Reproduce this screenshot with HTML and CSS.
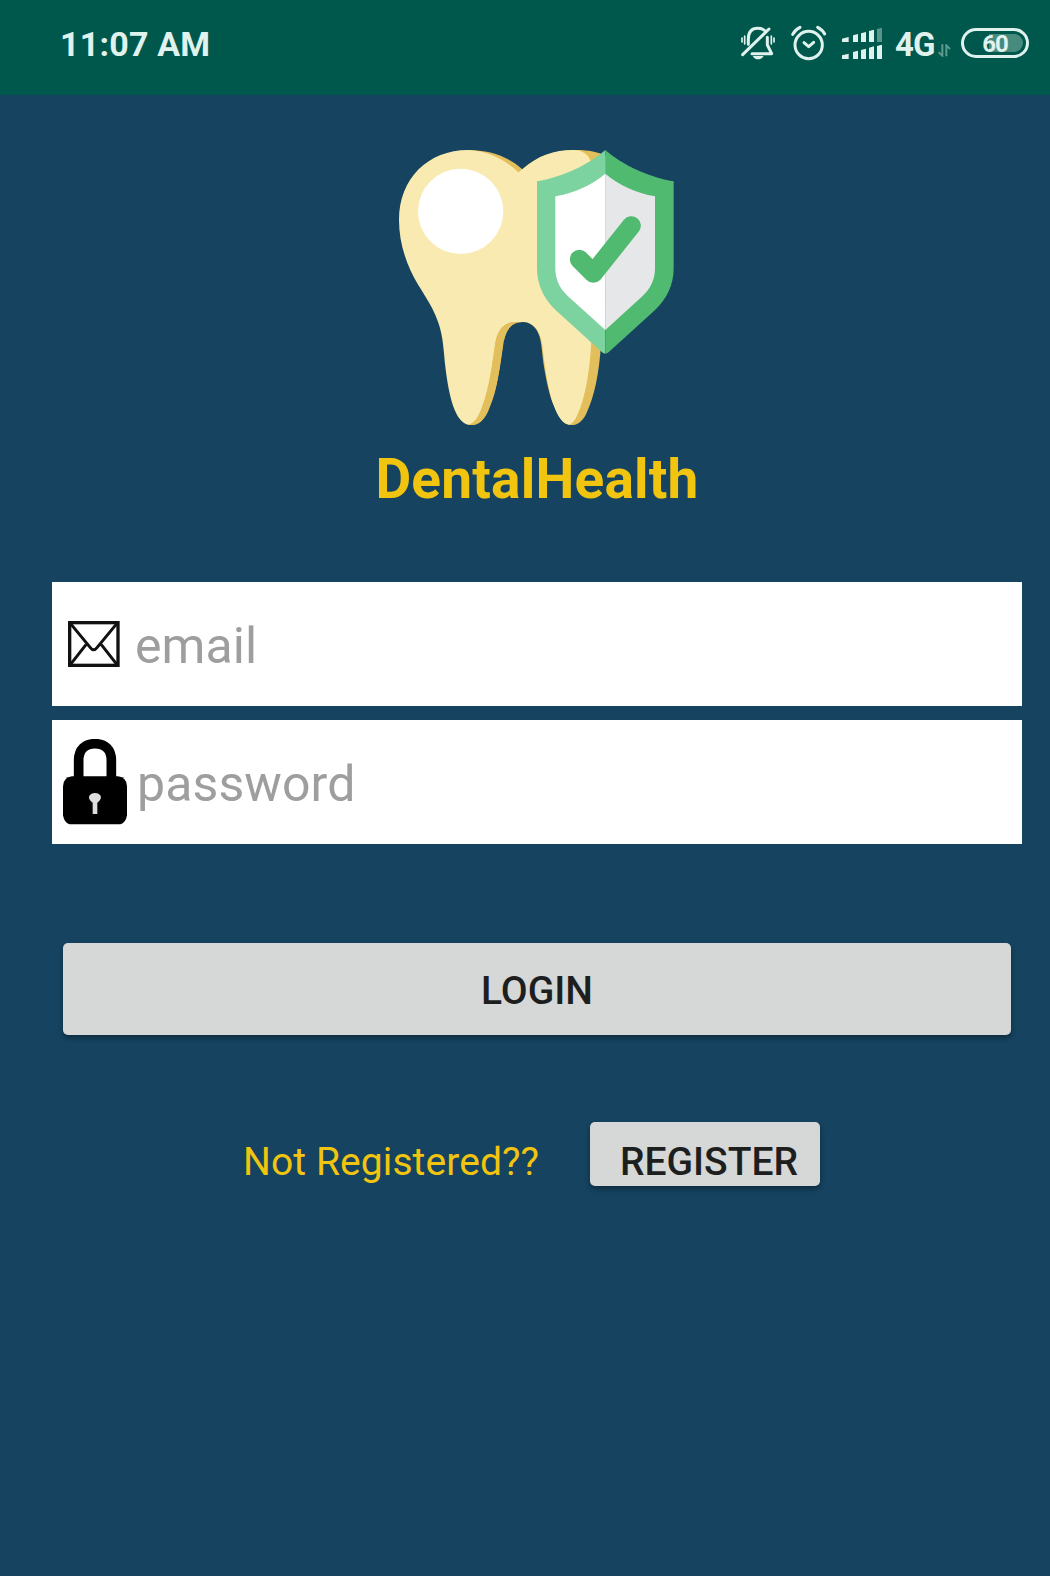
FILE: index.html
```html
<!DOCTYPE html>
<html lang="en">
<head>
<meta charset="UTF-8" />
<meta name="viewport" content="width=device-width, initial-scale=1" />
<title>DentalHealth</title>
<link rel="stylesheet" href="styles.css">
</head>
<body>

<header class="statusbar">
  <span class="time">11:07 AM</span>
  <div class="status-icons">
    <!-- muted bell -->
    <svg class="bell" width="37" height="36" viewBox="30 45 111 108" fill="none" stroke="#e0f2ee" stroke-width="9" stroke-linecap="round">
      <path d="M55 103V88C55 66 66 55 83 55C94 55 102 58 107 65"/>
      <path d="M112 82V105L125 131H66" stroke-linejoin="round"/>
      <path d="M38 134L117 57"/>
      <path d="M36 84V96M44 78V102M124 78V102M132 84V96" stroke-width="5"/>
      <path d="M68 138H101C97 145 91 148 84 148S72 145 68 138Z" fill="#e0f2ee" stroke="none"/>
    </svg>
    <!-- alarm clock -->
    <svg class="alarm" width="37" height="36" viewBox="180 45 111 108" fill="none" stroke="#e0f2ee" stroke-width="9" stroke-linecap="round">
      <circle cx="236" cy="105" r="41"/>
      <path d="M222 98L236 110L251 97" stroke-linejoin="round"/>
      <path d="M188 73C192 65 200 57 210 52M263 52C272 57 280 64 284 72"/>
    </svg>
    <!-- signal, two sims -->
    <svg class="signal" width="42" height="33" viewBox="333 51 126 99" fill="#e0f2ee">
      <path d="M336 86L356 81V96H336ZM369 76L384 72V96H369ZM393 70L408 66V96H393ZM417 63L432 59V96H417Z"/>
      <path d="M441 57L456 53V96H441Z" opacity=".4"/>
      <path d="M336 136L356 131V147H336ZM369 126L384 122V147H369ZM393 120L408 116V147H393ZM417 113L432 109V147H417ZM441 108L456 104V147H441Z"/>
    </svg>
    <span class="network">4G</span>
    <svg class="data" width="13" height="13" viewBox="174 101 39 39" fill="none" stroke="#5f998d" stroke-width="6">
      <path d="M187 102V136L176 126M199 138V105L210 116"/>
    </svg>
    <div class="battery"><span>60</span></div>
  </div>
</header>

<main class="login">
  <svg class="logo" width="275" height="275" viewBox="57 30 825 825">
    <!-- tooth shade -->
    <path fill="#e3bf5c" d="M264 30C330 30 386 50 427 88C474 46 528 30 590 30C626 30 664 36 700 60L663 610C658 700 642 774 620 818C602 862 562 865 543 838L420 600L370 600C362 680 352 750 328 805C308 862 265 868 244 837Z"/>
    <!-- tooth -->
    <path fill="#f8eab0" d="M264 30C325 33 375 58 415 97L427 88C474 46 522 30 580 30C610 31 630 46 632 68L660 400L634 600C630 690 616 775 592 825C585 842 576 852 567 854C530 848 508 770 495 680C489 640 488 608 480 588C471 560 450 546 427 546L402 546C370 548 352 572 346 608C338 660 330 740 305 805C295 833 282 850 267 854C225 850 206 765 196 680C191 635 190 590 175 548C155 487 119 450 92 392C70 345 57 292 57 240C57 115 145 30 264 30Z"/>
    <!-- gap between the roots -->
    <path fill="#154360" d="M427 546C393 546 377 572 371 606C360 680 352 760 320 858H555C519 820 502 740 492 680C486 640 485 608 478 588C469 560 450 546 427 546Z"/>
    <path fill="#e3bf5c" d="M402 546C370 548 352 572 346 608C338 660 330 740 305 805C295 833 282 850 267 854C290 858 305 847 317 825C352 755 360 680 371 606C377 568 397 546 427 546Z"/>
    <circle cx="242" cy="214" r="128" fill="#fff"/>
    <!-- shield -->
    <path fill="#7dd3a0" d="M676 30C625 75 545 112 471 124V385C471 435 492 478 530 513L663 634Q669 641 676 641Z"/>
    <path fill="#50ba70" d="M676 30C727 75 807 112 881 124V385C881 435 860 478 822 513L689 634Q683 641 676 641Z"/>
    <path fill="#fff" d="M676 101C637 134 583 159 526 169V385C526 418 539 446 564 469L676 570Z"/>
    <path fill="#e6e7e9" d="M676 101C715 134 769 159 825 169V385C825 418 812 446 787 469L676 570Z"/>
    <path d="M598 358L640 400L754 257" fill="none" stroke="#50ba70" stroke-width="57" stroke-linecap="round" stroke-linejoin="round"/>
  </svg>
  <h1>DentalHealth</h1>

  <label class="field email">
    <svg width="52" height="47" viewBox="84 151 156 141" fill="none" stroke="#111" stroke-width="9">
      <rect x="89" y="156" width="145" height="128" stroke-width="10"/>
      <path d="M91 158L151 231Q161 244 171 231L231 158M91 282L138 222M231 282L184 222"/>
    </svg>
    <input type="text" placeholder="email">
  </label>
  <label class="field password">
    <svg width="64" height="86" viewBox="68 506 192 258">
      <path d="M115 628V570C115 538 134 520 164 520S213 538 213 570V628" fill="none" stroke="#000" stroke-width="29"/>
      <path d="M95 618H233Q260 622 260 648V735Q256 758 240 762H88Q72 758 68 735V648Q68 622 95 618Z"/>
      <path d="M157 731V697C138 684 146 668 164 668S190 684 171 697V731Z" fill="#ddd"/>
    </svg>
    <input type="password" placeholder="password">
  </label>

  <button class="btn login-btn">LOGIN</button>

  <div class="register">
    <span>Not Registered??</span>
    <button class="btn register-btn">REGISTER</button>
  </div>
</main>

</body>
</html>
```
FILE: styles.css
```css
* {
  box-sizing: border-box;
}
body {
  margin: 0;
  min-height: 1576px;
  background: #154360;
  font-family: Roboto, sans-serif;
}
.statusbar {
  display: flex;
  justify-content: space-between;
  height: 95px;
  padding: 24px 21px 0 60px;
  background: #00574b;
  color: #e0f2ee;
}
.time {
  font-size: 34px;
  font-weight: bold;
  letter-spacing: 0.2px;
  line-height: 40px;
}
.status-icons {
  display: flex;
  align-items: flex-start;
}
.bell {
  margin: 1px 13px 0 0;
}
.alarm {
  margin: 1px 14px 0 0;
}
.signal {
  margin: 3px 12px 0 0;
}
.network {
  width: 39px;
  margin-right: 4px;
  font-size: 33px;
  font-weight: bold;
  letter-spacing: -1px;
  line-height: 41px;
}
.data {
  margin: 20px 10px 0 0;
}
.battery {
  width: 68px;
  height: 30px;
  margin-top: 4px;
  padding: 3px;
  border: 3px solid #e0f2ee;
  border-radius: 15px;
  text-align: center;
}
.battery span {
  display: block;
  height: 18px;
  border-radius: 9px;
  background: linear-gradient(90deg, #00574b 40%, #468b7e 40%);
  font-size: 24px;
  font-weight: bold;
  letter-spacing: -1px;
  line-height: 20px;
}
.login {
  display: flex;
  flex-direction: column;
  padding: 55px 28px 0 52px;
}
.logo {
  align-self: center;
  margin-right: 1px;
}
h1 {
  margin: 22px 0 0;
  color: #f1c40f;
  font-size: 55px;
  letter-spacing: 0.2px;
  line-height: 64px;
  text-align: center;
}
.field {
  display: flex;
  align-items: center;
  height: 124px;
  background: #fff;
}
.email {
  margin: 71px 0 14px;
  padding-left: 16px;
}
.password {
  padding-left: 11px;
}
.field input {
  flex: 1;
  padding: 0;
  border: none;
  outline: none;
  background: none;
  font: 50px Roboto, sans-serif;
  letter-spacing: 0.1px;
}
.email input {
  margin: 3px 0 0 15px;
}
.password input {
  margin: 3px 0 0 10px;
}
.field input::placeholder {
  color: #9e9e9e;
}
.btn {
  border: none;
  border-radius: 5px;
  background: #d6d7d7;
  box-shadow: 0 3px 5px rgba(0,0,0,0.35);
  color: #1d1f1f;
  font: 500 39px Roboto, sans-serif;
}
.login-btn {
  height: 92px;
  margin: 99px 11px 87px;
  padding: 4px 0 0;
}
.register {
  display: flex;
  padding-left: 191px;
}
.register span {
  width: 347px;
  padding-top: 17px;
  color: #f1c40f;
  font-size: 39px;
  letter-spacing: 0.1px;
  line-height: 46px;
}
.register-btn {
  width: 230px;
  height: 64px;
  padding: 16px 0 0 8px;
  line-height: 48px;
}
```
